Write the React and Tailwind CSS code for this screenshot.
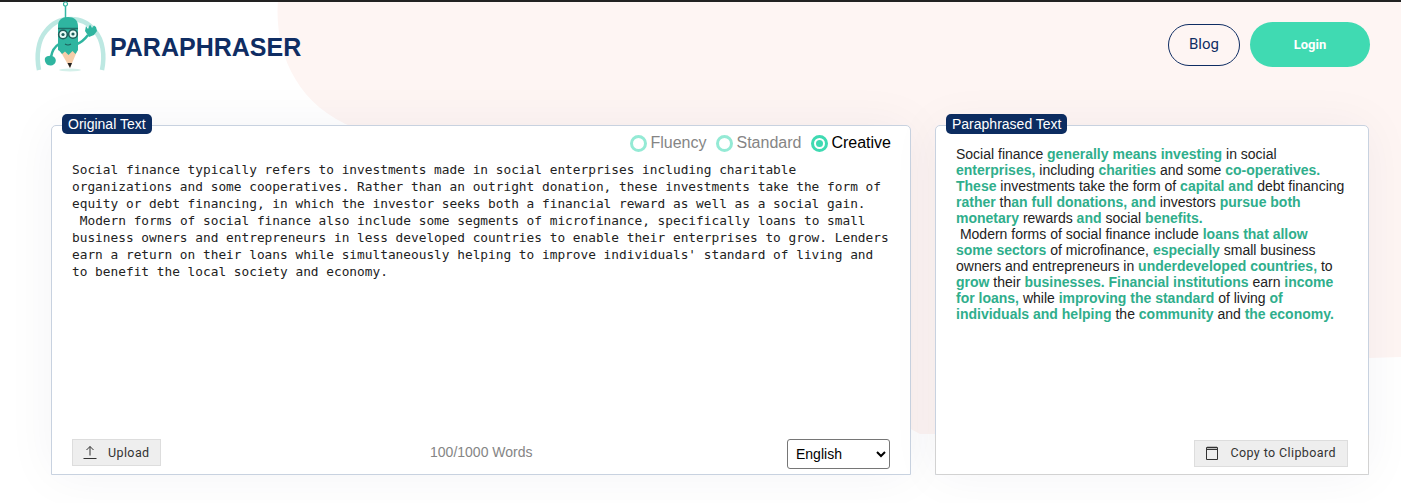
const originalText = `Social finance typically refers to investments made in social enterprises including charitable organizations and some cooperatives. Rather than an outright donation, these investments take the form of equity or debt financing, in which the investor seeks both a financial reward as well as a social gain.
 Modern forms of social finance also include some segments of microfinance, specifically loans to small business owners and entrepreneurs in less developed countries to enable their enterprises to grow. Lenders earn a return on their loans while simultaneously helping to improve individuals' standard of living and to benefit the local society and economy.`;

// [text, changed]
const paraphrased = [
  ["Social finance ", false],
  ["generally means investing", true],
  [" in social ", false],
  ["enterprises,", true],
  [" including ", false],
  ["charities", true],
  [" and some ", false],
  ["co-operatives. These", true],
  [" investments take the form of ", false],
  ["capital and", true],
  [" debt financing ", false],
  ["rather", true],
  [" th", false],
  ["an full donations, and", true],
  [" investors ", false],
  ["pursue both monetary", true],
  [" rewards ", false],
  ["and", true],
  [" social ", false],
  ["benefits.", true],
  ["\n Modern forms of social finance include ", false],
  ["loans that allow some sectors", true],
  [" of microfinance, ", false],
  ["especially", true],
  [" small business owners and entrepreneurs in ", false],
  ["underdeveloped countries,", true],
  [" to ", false],
  ["grow", true],
  [" their ", false],
  ["businesses. Financial institutions", true],
  [" earn ", false],
  ["income for loans,", true],
  [" while ", false],
  ["improving the standard", true],
  [" of living ", false],
  ["of individuals and helping", true],
  [" the ", false],
  ["community", true],
  [" and ", false],
  ["the economy.", true],
];

const Logo = () => (
  <svg width="80" height="75" viewBox="30 0 80 75" className="shrink-0">
    <path
      d="M39 70 C36 56 38 40 46 31 C52 23 61 19 70.5 19 C80 19 89 23 95 31 C103 40 105 56 102 70"
      fill="none"
      stroke="#bde8e2"
      strokeWidth="4.5"
    />
    <ellipse cx="70" cy="70" rx="11" ry="1.5" fill="#d5f0ea" />
    <path d="M65.5 6 V18" stroke="#35b7a4" strokeWidth="1.5" />
    <circle cx="65.5" cy="4" r="2" fill="#fff" stroke="#35b7a4" strokeWidth="1.2" />
    {/* arms */}
    <path d="M59 44 C54 47 52 51 51 57" fill="none" stroke="#2fb5a0" strokeWidth="2.5" />
    <path d="M45 58 C47 55 53 55 55 58 C57 61 55 65 51 65.5 C47 66 44 62 45 58 Z" fill="#2fb5a0" />
    <path d="M77 44 C82 42 85 39 88 35" fill="none" stroke="#2fb5a0" strokeWidth="2.5" />
    <path d="M85 31 L86 26 L88 29 L90 24.5 L92 28 L94 25.5 L96 27 L97 31 L94 35 L89 37 Z" fill="#2fb5a0" />
    {/* pencil */}
    <path d="M59 49 L70 68 L78 49 Z" fill="#f5cda9" />
    <path d="M67.5 63 L70 68 L72 63 Z" fill="#222" />
    <path
      d="M58 26 C58 20 62 17 68 17 C74 17 78 20 78 26 V50 L75.5 54 L72.5 51 L68.5 55 L65 51.5 L62 54 L59.5 51 L58 50 Z"
      fill="#2fb5a0"
    />
    <path d="M58 28.5 H78" stroke="#1f6f68" strokeWidth="1.5" />
    <circle cx="63" cy="34.5" r="4.3" fill="#e8fbf6" stroke="#1f5f5b" strokeWidth="1.6" />
    <circle cx="73" cy="34" r="4.3" fill="#e8fbf6" stroke="#1f5f5b" strokeWidth="1.6" />
    <circle cx="63" cy="34.5" r="1.6" fill="#1f5f5b" />
    <circle cx="73" cy="34" r="1.6" fill="#1f5f5b" />
    <path d="M65 44 Q68 46 71 44" fill="none" stroke="#1f5f5b" strokeWidth="1.2" />
  </svg>
);

const Radio = ({ label, checked }) => (
  <label className="flex items-center gap-[3px]">
    <span
      className={`w-[17px] h-[17px] rounded-full border-[3px] flex items-center justify-center ${
        checked ? "border-[#3fdab2]" : "border-[#94ead5]"
      }`}
    >
      {checked && <span className="w-[7px] h-[7px] rounded-full bg-[#3fdab2]" />}
    </span>
    <span className={checked ? "text-black" : "text-[#858585]"}>{label}</span>
  </label>
);

const Tag = ({ children }) => (
  <span className="absolute left-[10px] -top-3 h-5 px-1.5 rounded-[5px] bg-[#0c2c60] text-white text-sm leading-5">
    {children}
  </span>
);

const ToolButton = ({ icon, children }) => (
  <button className="h-[27px] flex items-center bg-[#eeeeee] border border-[#dddddd] text-[#333] text-[12.5px] tracking-[0.4px] font-['Roboto',sans-serif]">
    {icon}
    {children}
  </button>
);

export default function App() {
  return (
    <div className="relative h-[503px] overflow-hidden bg-white font-['Liberation_Sans',sans-serif]">
      {/* pink backdrop shape */}
      <svg className="absolute left-0 top-0" width="1401" height="503">
        <path
          d="M278 0 C274 50 295 105 355 128 L920 434 L935 434 L1369 358 L1401 357 V0 Z"
          fill="#fef5f3"
        />
      </svg>
      <div className="relative">
        <div className="h-0.5 bg-[#222222]" />

        {/* Header */}
        <header className="h-[86px] flex items-start justify-between pl-[30px] pr-[31px]">
          <div className="flex items-start -mt-0.5">
            <Logo />
            <span className="mt-8 text-[25px] font-bold text-[#0f2d63] leading-[30px]">PARAPHRASER</span>
          </div>
          <div className="flex items-center gap-2.5 mt-5">
            <button className="w-[72px] h-[42px] rounded-full border border-[#0f2d63] text-[#0f2d63] text-[15px] font-['Roboto',sans-serif]">
              Blog
            </button>
            <button className="w-[120px] h-[45px] rounded-full bg-[#40dab2] text-white text-[13px] font-bold font-['Roboto',sans-serif]">
              Login
            </button>
          </div>
        </header>

        {/* Panels */}
        <main className="mt-[37px] flex gap-6 pl-[51px] pr-8">
          <section className="relative w-[860px] h-[350px] flex flex-col bg-white border border-[#c8d2e0] rounded-t-[5px] pl-5 pr-5 shadow-[0_0_50px_rgba(30,40,70,0.05)]">
            <Tag>Original Text</Tag>
            <div className="flex justify-end gap-2.5 pt-[7px] -mr-px text-base leading-5">
              <Radio label="Fluency" />
              <Radio label="Standard" />
              <Radio label="Creative" checked />
            </div>
            <textarea
              readOnly
              defaultValue={originalText}
              className="flex-1 mt-2 resize-none outline-none overflow-hidden text-[12.8px] leading-[17px] text-[#222] font-['DejaVu_Sans_Mono',monospace]"
            />
            <div className="h-[35px] flex items-start justify-between">
              <ToolButton
                icon={
                  <svg width="16" height="16" viewBox="0 0 16 16" className="ml-[9px] mr-[10px] -mt-0.5" fill="none" stroke="#333" strokeWidth="1">
                    <path d="M8 11.5V2.5M4.5 6L8 2.5L11.5 6M1.5 14.5H14.5" />
                  </svg>
                }
              >
                <span className="mr-2.5 mt-0.5">Upload</span>
              </ToolButton>
              <span className="ml-[15px] text-sm text-[#858585] leading-[27px]">100/1000 Words</span>
              <select className="w-[103px] h-[30px] pl-1 bg-white border border-[#767676] rounded-[3px] text-sm text-black">
                <option>English</option>
              </select>
            </div>
          </section>

          <section className="relative w-[434px] h-[350px] flex flex-col bg-white border border-[#c8d2e0] rounded-t-[5px] shadow-[0_0_50px_rgba(30,40,70,0.05)]">
            <Tag>Paraphrased Text</Tag>
            <p className="flex-1 pl-5 pr-5 pt-5 text-sm leading-4 text-[#222] whitespace-pre-wrap">
              {paraphrased.map(([text, changed], i) =>
                changed ? (
                  <b key={i} className="text-[#2fae8c]">{text}</b>
                ) : (
                  <span key={i}>{text}</span>
                )
              )}
            </p>
            <div className="h-[40px] -mx-px -mb-px flex justify-end items-start pt-[5px] pr-5 bg-white border-x border-b border-[#d2d2d2] rounded-b-[2px]">
              <ToolButton
                icon={
                  <svg width="14" height="16" viewBox="0 0 14 16" className="ml-[10px] mr-[11px] -mt-0.5" fill="none" stroke="#333" strokeWidth="1">
                    <path d="M1.5 2.5H12.5V14.5H1.5Z" />
                    <path d="M1.5 4.5H12.5M3 1.5V3.5M5 1.5V3.5M7 1.5V3.5M9 1.5V3.5M11 1.5V3.5" />
                  </svg>
                }
              >
                <span className="mr-[11px]">Copy to Clipboard</span>
              </ToolButton>
            </div>
          </section>
        </main>
      </div>
    </div>
  );
}
